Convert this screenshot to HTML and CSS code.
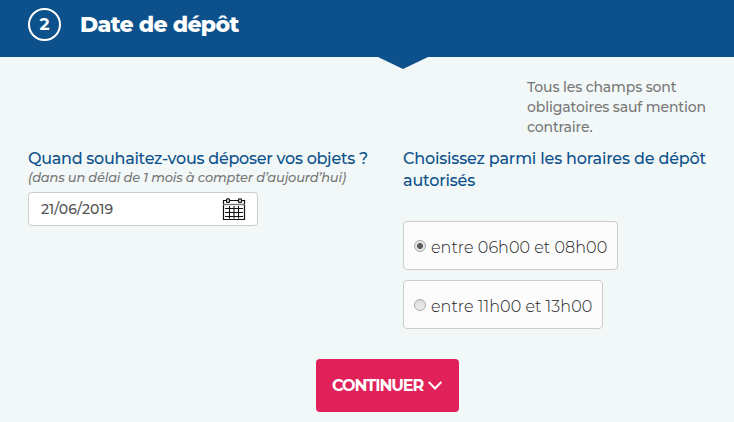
FILE: index.html
```html
<!DOCTYPE html>
<html lang="fr">
	<head>
		<meta charset="utf-8" />
		<meta name="viewport" content="width=device-width, initial-scale=1.0" />
		<title>Date de dépôt</title>
		<link rel="stylesheet" href="styles.css">
	</head>

	<body>
		<header class="step">
			<span class="step-number">2</span>
			<h1>Date de dépôt</h1>
		</header>

		<form class="form">
			<p class="notice">
				Tous les champs sont<br />
				obligatoires sauf mention<br />
				contraire.
			</p>

			<div class="columns">
				<div class="col">
					<label class="label label_date" for="date">Quand souhaitez-vous déposer vos objets ?</label>
					<p class="hint">(dans un délai de 1 mois à compter d’aujourd’hui)</p>
					<div class="date-field">
						<input id="date" class="date" type="text" value="21/06/2019" />
						<svg class="calendar" width="24" height="23" viewBox="0 0 24 23" fill="none" stroke="#111">
							<path d="M4 2.500H1.500v19h21v-19H20M8 2.500h8" stroke-width="1.2" />
							<path d="M1 6.500h22" stroke="#777" stroke-width="1.4" />
							<rect x="4.500" y=".8" width="3" height="3.600" rx="1" stroke-width="1.3" />
							<rect x="16.500" y=".8" width="3" height="3.600" rx="1" stroke-width="1.3" />
							<path d="M3 10.500h18M3 14.500h18M3 18.500h18M7.500 8v12.500M12 8v12.500M16.500 8v12.500" stroke-width="1.1" />
						</svg>
					</div>
				</div>

				<div class="col">
					<p class="label">
						Choisissez parmi les horaires de dépôt<br />
						autorisés
					</p>
					<div class="slots">
						<label class="slot slot_1">
							<input class="radio" type="radio" name="slot" checked />
							<span>entre 06h00 et 08h00</span>
						</label>
						<label class="slot slot_2">
							<input class="radio" type="radio" name="slot" />
							<span>entre 11h00 et 13h00</span>
						</label>
					</div>
				</div>
			</div>

			<button class="submit" type="button">
				<span>CONTINUER</span>
				<svg class="chevron" width="14" height="10" viewBox="0 0 14 10" fill="none" stroke="#fff" stroke-width="2">
					<path d="M.700 1l6.300 6.500L13.300 1" />
				</svg>
			</button>
		</form>
	</body>
</html>
```

FILE: styles.css
```css
* {
	box-sizing: border-box;
}

body {
	margin: 0;
	min-height: 422px;
	background: #f2f7f8;
	font-family: Montserrat, Inter, sans-serif;
	color: #333;
}

h1,
p {
	margin: 0;
}

.step {
	position: relative;
	display: flex;
	align-items: center;
	column-gap: 19px;
	height: 57px;
	padding: 0 28px 8px;
	background: #0c518b;
	color: #fff;
}

/* pointer under the blue bar */
.step::after {
	content: "";
	position: absolute;
	top: 100%;
	left: 378px;
	border: solid transparent;
	border-width: 12px 25px 0;
	border-top-color: #0c518b;
}

.step-number {
	display: flex;
	justify-content: center;
	align-items: center;
	width: 33px;
	height: 33px;
	padding-bottom: 1px;
	border: 2px solid #fff;
	border-radius: 50%;
	font-size: 17px;
	font-weight: 700;
}

.step h1 {
	font-size: 22px;
	line-height: 33px;
	font-weight: 800;
	letter-spacing: -0.65px;
}

.form {
	padding: 20px 28px 10px;
}

.notice {
	margin-left: 499px;
	font-size: 14px;
	line-height: 20px;
	font-weight: 500;
	letter-spacing: -0.13px;
	white-space: nowrap;
	color: #777;
}

.columns {
	display: grid;
	grid-template-columns: 375px 1fr;
	margin-top: 11px;
}

.label {
	display: block;
	font-size: 16px;
	line-height: 22px;
	font-weight: 500;
	letter-spacing: -0.18px;
	white-space: nowrap;
	color: #0c518b;
}

.label_date {
	letter-spacing: -0.27px;
}

.hint {
	font-size: 13px;
	line-height: 15px;
	font-style: italic;
	font-weight: 500;
	letter-spacing: -0.2px;
	white-space: nowrap;
	color: #777;
}

.date-field {
	display: flex;
	align-items: center;
	width: 230px;
	height: 34px;
	margin-top: 7px;
	padding: 0 11px 0 12px;
	background: #fff;
	border: 1px solid #ccc;
	border-radius: 4px;
}

.date {
	flex: 1;
	min-width: 0;
	padding: 0;
	border: 0;
	background: none;
	font: 500 14px Montserrat, Inter, sans-serif;
	color: #555;
}

.slots {
	display: flex;
	flex-direction: column;
	align-items: flex-start;
	row-gap: 10px;
	margin-top: 29px;
}

.slot {
	display: flex;
	align-items: center;
	column-gap: 5px;
	height: 49px;
	padding: 3px 10px 0;
	background: #fcfcfc;
	border: 1px solid #ccc;
	border-radius: 4px;
	font-size: 16px;
	font-weight: 300;
	letter-spacing: 0.06px;
	white-space: nowrap;
	color: #222;
}

.slot_1 {
	width: 215px;
}

.slot_2 {
	width: 200px;
}

.radio {
	appearance: none;
	flex: none;
	width: 12px;
	height: 12px;
	margin: 0 0 3px;
	border: 1px solid #aaa;
	border-radius: 50%;
	background: linear-gradient(#ddd, #eee);
}

.radio:checked {
	background: radial-gradient(circle, #5c5c5c 2.6px, #e6e6e6 3.4px);
}

.submit {
	display: flex;
	align-items: center;
	column-gap: 5px;
	width: 143px;
	height: 53px;
	margin: 30px 0 0 288px;
	padding: 0 16px;
	border: 0;
	border-radius: 4px;
	background: #e0215a;
	color: #fff;
	font: 700 16px Montserrat, Inter, sans-serif;
	letter-spacing: -1.05px;
}

.chevron {
	flex: none;
}
```
